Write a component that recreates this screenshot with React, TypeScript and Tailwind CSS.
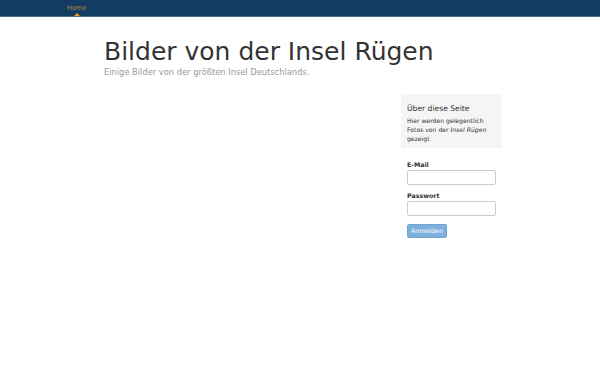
export default function App() {
  return (
    <div className="min-h-[375px] w-[600px] bg-white" style={{ fontFamily: '"DejaVu Sans", sans-serif' }}>
      <div className="h-[17px] bg-[#133c62] border-b border-[#4a6a8a]">
        <div className="ml-[67px] relative w-fit">
          <span className="block text-[6.5px] leading-[16px] text-[#b08d4a]">Home</span>
          <span className="absolute left-1/2 -translate-x-1/2 top-[13px] w-0 h-0 border-l-[3px] border-r-[3px] border-b-[3px] border-l-transparent border-r-transparent border-b-[#f0a020]" />
        </div>
      </div>
      <div className="ml-[104px] w-[398px]">
        <h1 className="mt-[20px] text-[25px] leading-[30px] text-[#333]">Bilder von der Insel Rügen</h1>
        <p className="text-[8.3px] leading-[10px] text-[#999]">Einige Bilder von der größten Insel Deutschlands.</p>
        <div className="flex justify-end mt-[17px]">
          <div className="w-[101px]">
            <div className="bg-[#f5f5f5] px-[6px] pt-[9px] pb-[5px]">
              <div className="text-[7.6px] leading-[11px] text-[#333]">Über diese Seite</div>
              <div className="mt-[2px] text-[6.1px] leading-[9px] text-[#333]">
                Hier werden gelegentlich<br />Fotos von der <i>Insel Rügen</i><br />gezeigt
              </div>
            </div>
            <div className="px-[6px] mt-[12px]">
              <div className="text-[6.3px] leading-[9px] font-bold text-[#333]">E-Mail</div>
              <div className="mt-[1px] h-[15px] w-[89px] border border-[#ccc] rounded-[2px] bg-white" />
              <div className="mt-[6px] text-[6.3px] leading-[9px] font-bold text-[#333]">Passwort</div>
              <div className="mt-[1px] h-[15px] w-[89px] border border-[#ccc] rounded-[2px] bg-white" />
              <button className="mt-[4px] h-[14px] w-[40px] rounded-[2px] bg-[#7eb0dc] border border-[#6fa3d0] text-[6.3px] leading-[12px] text-white">Anmelden</button>
            </div>
          </div>
        </div>
      </div>
    </div>
  );
}
